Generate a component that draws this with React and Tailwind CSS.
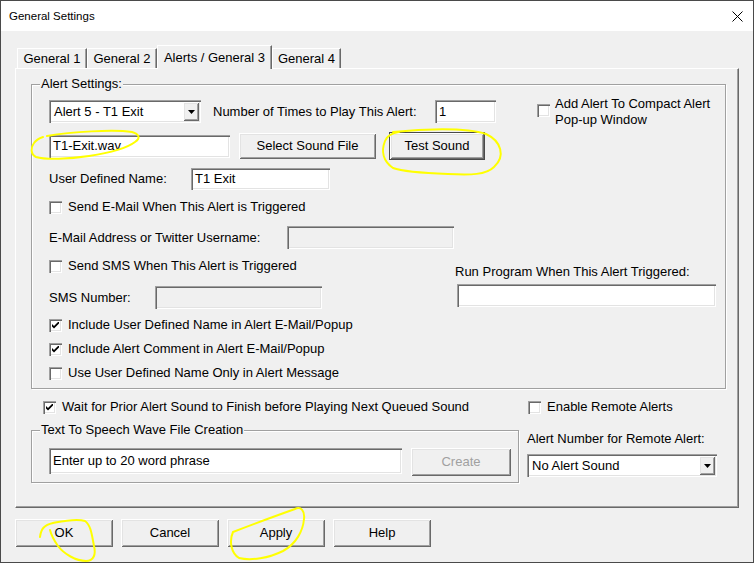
import React from "react";

const sunken =
  "shadow-[inset_1px_1px_0_#a0a0a0,inset_2px_2px_0_#696969,inset_-1px_-1px_0_#ffffff,inset_-2px_-2px_0_#e3e3e3]";
const raised =
  "shadow-[inset_1px_1px_0_#ffffff,inset_-1px_-1px_0_#696969,inset_2px_2px_0_#e3e3e3,inset_-2px_-2px_0_#a0a0a0]";

function Check({ checked, label, className = "" }) {
  return (
    <div className={"flex items-center h-[16px] " + className}>
      <span
        className={
          "w-[13px] h-[13px] bg-white shrink-0 flex items-center justify-center " +
          sunken
        }
      >
        {checked && (
          <svg width="7" height="7" viewBox="0 0 7 7">
            <path d="M0 2 L0 4.5 L2 6.5 L7 1.5 L7 -1 L2 4 Z" fill="#000" />
          </svg>
        )}
      </span>
      <span className="ml-[6px] whitespace-nowrap">{label}</span>
    </div>
  );
}

function Edit({ value = "", disabled, className = "" }) {
  return (
    <div
      className={
        "flex items-center pl-[4px] whitespace-nowrap overflow-hidden " +
        (disabled ? "bg-[#f0f0f0] " : "bg-white ") +
        sunken +
        " " +
        className
      }
    >
      {value}
    </div>
  );
}

function Button({ children, className = "", disabled, isDefault }) {
  if (isDefault) {
    return (
      <div className={"border border-[#4a4a4a] flex " + className}>
        <div
          className={
            "flex-1 flex items-center justify-center bg-[#f0f0f0] " + raised
          }
        >
          {children}
        </div>
      </div>
    );
  }
  return (
    <div
      className={
        "flex items-center justify-center bg-[#f0f0f0] " +
        raised +
        " " +
        (disabled ? "text-[#a0a0a0] " : "") +
        className
      }
    >
      {children}
    </div>
  );
}

function Combo({ value, className = "" }) {
  return (
    <div
      className={
        "flex items-stretch bg-white p-[2px] " + sunken + " " + className
      }
    >
      <div className="flex-1 flex items-center pl-[3px] whitespace-nowrap">
        {value}
      </div>
      <div
        className={
          "w-[16px] flex items-center justify-center bg-[#f0f0f0] " + raised
        }
      >
        <svg width="7" height="4" viewBox="0 0 7 4">
          <path d="M0 0 L7 0 L3.5 4 Z" fill="#000" />
        </svg>
      </div>
    </div>
  );
}

function Group({ title, className = "", children }) {
  return (
    <div
      className={
        "relative border border-[#a0a0a0] shadow-[inset_1px_1px_0_#ffffff,1px_1px_0_#ffffff] " +
        className
      }
    >
      <span className="absolute left-[8px] top-[-9px] px-[1px] bg-[#f0f0f0] whitespace-nowrap">
        {title}
      </span>
      {children}
    </div>
  );
}

function Tab({ label, selected, className = "" }) {
  return (
    <div
      className={
        "flex items-center justify-center border-t border-l border-white border-r border-r-[#696969] shadow-[inset_-1px_0_0_#a0a0a0] bg-[#f0f0f0] whitespace-nowrap " +
        (selected ? "h-[24px] mb-[-1px] relative z-10 " : "h-[20px] ") +
        className
      }
    >
      {label}
    </div>
  );
}

function Marks() {
  return (
    <svg
      className="absolute inset-0 pointer-events-none z-20"
      width="754"
      height="563"
      viewBox="0 0 754 563"
      fill="none"
      stroke="#ffff00"
      strokeWidth="2"
      strokeLinecap="round"
      strokeLinejoin="round"
    >
      <path d="M46 135 C70 131 112 128 131 131 C138 133 140 137 134 141 C126 147 108 152 88 155 C68 158 45 159 35 156 C29 153 30 146 33 142 C35 139 39 137 42 136" />
      <path d="M392 131 C420 128 465 126 485 133 C500 140 505 155 493 166 C485 174 470 174 447 173 C420 172 400 170 392 167 C382 160 380 150 384 140 C386 135 390 132 398 131" />
      <path d="M39 536 C40 528 43 524 52 522 C62 520 75 517 84 520 C90 524 91 535 93 545 C95 553 93 560 85 560 C75 560 63 553 57 545 C52 538 50 533 49 529" />
      <path d="M232 531 C228 540 230 552 238 557 C250 560 268 557 282 550 C295 543 302 530 303 518 C304 510 300 505 294 508 C280 513 255 522 232 531" />
    </svg>
  );
}

export default function App() {
  return (
    <div className="w-[754px] h-[563px] relative overflow-hidden border border-[#4a4a4a] bg-[#f0f0f0] text-black text-[13px] leading-[16px] font-['Liberation_Sans',Arial,sans-serif]">
      {/* title bar */}
      <div className="h-[30px] bg-white flex items-center justify-between pl-[8px] pr-[10px]">
        <span className="text-[11.5px]">General Settings</span>
        <svg width="11" height="11" viewBox="0 0 11 11">
          <path d="M0.5 0.5 L10.5 10.5 M10.5 0.5 L0.5 10.5" stroke="#000" strokeWidth="1" />
        </svg>
      </div>

      <div className="pl-[14px] pt-[14px]">
        {/* tabs */}
        <div className="flex items-end h-[23px] ml-[2px]">
          <Tab label="General 1" className="w-[70px]" />
          <Tab label="General 2" className="w-[70px]" />
          <Tab label="Alerts / General 3" selected className="w-[115px]" />
          <Tab label="General 4" className="w-[69px]" />
        </div>

        {/* tab panel */}
        <div className="w-[724px] h-[440px] border border-t-white border-l-white border-r-[#696969] border-b-[#696969] shadow-[inset_-1px_-1px_0_#a0a0a0] pl-[15px] pt-[15px]">
          <Group title="Alert Settings:" className="w-[695px] h-[305px] pl-[17px] pt-[15px]">
            <div className="flex items-center h-[23px]">
              <Combo value="Alert 5 - T1 Exit" className="w-[152px] h-[23px]" />
              <span className="ml-[12px] w-[222px] whitespace-nowrap">
                Number of Times to Play This Alert:
              </span>
              <Edit value="1" className="w-[61px] h-[23px]" />
              <div className="ml-[41px] flex items-start">
                <span className={"mt-[8px] w-[13px] h-[13px] bg-white shrink-0 " + sunken} />
                <span className="ml-[5px] whitespace-nowrap">
                  Add Alert To Compact Alert
                  <br />
                  Pop-up Window
                </span>
              </div>
            </div>

            <div className="flex items-center h-[28px] mt-[9px]">
              <Edit value="T1-Exit.wav" className="w-[181px] h-[23px]" />
              <Button className="ml-[9px] w-[137px] h-[26px]">Select Sound File</Button>
              <Button isDefault className="ml-[13px] w-[96px] h-[28px]">
                Test Sound
              </Button>
            </div>

            <div className="flex items-center h-[22px] mt-[8px]">
              <span className="w-[142px] whitespace-nowrap">User Defined Name:</span>
              <Edit value="T1 Exit" className="w-[139px] h-[22px]" />
            </div>

            <Check label="Send E-Mail When This Alert is Triggered" className="mt-[9px]" />

            <div className="flex items-center h-[23px] mt-[11px]">
              <span className="w-[238px] whitespace-nowrap">
                E-Mail Address or Twitter Username:
              </span>
              <Edit disabled className="w-[167px] h-[23px]" />
            </div>

            <div className="flex mt-[9px]">
              <div className="w-[406px]">
                <Check label="Send SMS When This Alert is Triggered" />
                <div className="flex items-center h-[23px] mt-[12px]">
                  <span className="w-[106px] whitespace-nowrap">SMS Number:</span>
                  <Edit disabled className="w-[167px] h-[23px]" />
                </div>
              </div>
              <div className="mt-[6px]">
                <div className="h-[16px] whitespace-nowrap">
                  Run Program When This Alert Triggered:
                </div>
                <Edit className="mt-[4px] ml-[2px] w-[259px] h-[23px]" />
              </div>
            </div>

            <Check checked label="Include User Defined Name in Alert E-Mail/Popup" className="mt-[8px]" />
            <Check checked label="Include Alert Comment in Alert E-Mail/Popup" className="mt-[8px]" />
            <Check label="Use User Defined Name Only in Alert Message" className="mt-[8px]" />
          </Group>

          <div className="flex mt-[10px]">
            <Check
              checked
              label="Wait for Prior Alert Sound to Finish before Playing Next Queued Sound"
              className="ml-[12px] w-[485px]"
            />
            <Check label="Enable Remote Alerts" />
          </div>

          <div className="flex mt-[15px]">
            <Group
              title="Text To Speech Wave File Creation"
              className="w-[488px] h-[53px] pl-[17px] pt-[17px]"
            >
              <div className="flex items-start">
                <Edit value="Enter up to 20 word phrase" className="w-[353px] h-[26px]" />
                <Button disabled className="ml-[9px] w-[100px] h-[28px]">
                  Create
                </Button>
              </div>
            </Group>
            <div className="ml-[8px] mt-[1px]">
              <div className="h-[16px] whitespace-nowrap">Alert Number for Remote Alert:</div>
              <Combo value="No Alert Sound" className="mt-[7px] w-[190px] h-[23px]" />
            </div>
          </div>
        </div>

        {/* dialog buttons */}
        <div className="flex gap-[8px] mt-[11px]">
          <Button className="w-[98px] h-[28px]">OK</Button>
          <Button className="w-[98px] h-[28px]">Cancel</Button>
          <Button className="w-[98px] h-[28px]">Apply</Button>
          <Button className="w-[98px] h-[28px]">Help</Button>
        </div>
      </div>

      <Marks />
    </div>
  );
}
